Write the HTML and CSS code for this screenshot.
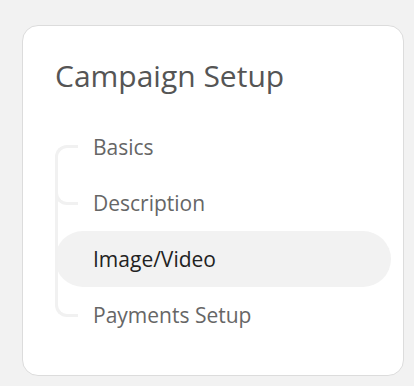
FILE: index.html
```html
<!DOCTYPE html>
<html lang="en">
<head>
  <meta charset="UTF-8" />
  <meta name="viewport" content="width=device-width, initial-scale=1.0" />
  <title>Campaign Setup</title>
  <link rel="stylesheet" href="styles.css">
</head>
<body>
  <div class="card">
    <h2>Campaign Setup</h2>
    <ul class="steps">
      <li>Basics</li>
      <li>Description</li>
      <li class="active">Image/Video</li>
      <li>Payments Setup</li>
    </ul>
  </div>
</body>
</html>
```

FILE: styles.css
```css
body {
  margin: 0;
  padding: 25px 0 0 22px;
  font-family: 'Open Sans', sans-serif;
  background-color: #f2f2f2;
}
.card {
  width: 382px;
  height: 351px;
  box-sizing: border-box;
  padding: 30px 12px 0 32px;
  background-color: #fff;
  border: 1px solid #dcdcdc;
  border-radius: 16px;
}
.card h2 {
  margin: 0;
  font-size: 30px;
  font-weight: 400;
  line-height: 40px;
  color: #555;
}
.steps {
  list-style: none;
  margin: 23px 0 0;
  padding: 0;
}
.steps li {
  position: relative;
  height: 56px;
  line-height: 56px;
  padding-left: 38px;
  font-size: 21px;
  color: #666;
  border-radius: 28px;
}
.steps li.active {
  background-color: #f2f2f2;
  color: #222;
}
/* tree connectors */
.steps li::before {
  content: "";
  position: absolute;
  left: 0;
  top: -1px;
  width: 23px;
  height: 31px;
  box-sizing: border-box;
  border-left: 3px solid #f1f1f1;
  border-bottom: 3px solid #f1f1f1;
  border-bottom-left-radius: 12px;
}
.steps li:first-child::before {
  top: 26px;
  height: 31px;
  border-bottom: none;
  border-top: 3px solid #f1f1f1;
  border-radius: 12px 0 0 0;
}
.steps li.active::before {
  height: 58px;
  border-bottom: none;
  border-radius: 0;
}
.steps li:nth-child(2)::after {
  content: "";
  position: absolute;
  left: 0;
  top: 18px;
  bottom: -1px;
  border-left: 3px solid #f1f1f1;
}
```
